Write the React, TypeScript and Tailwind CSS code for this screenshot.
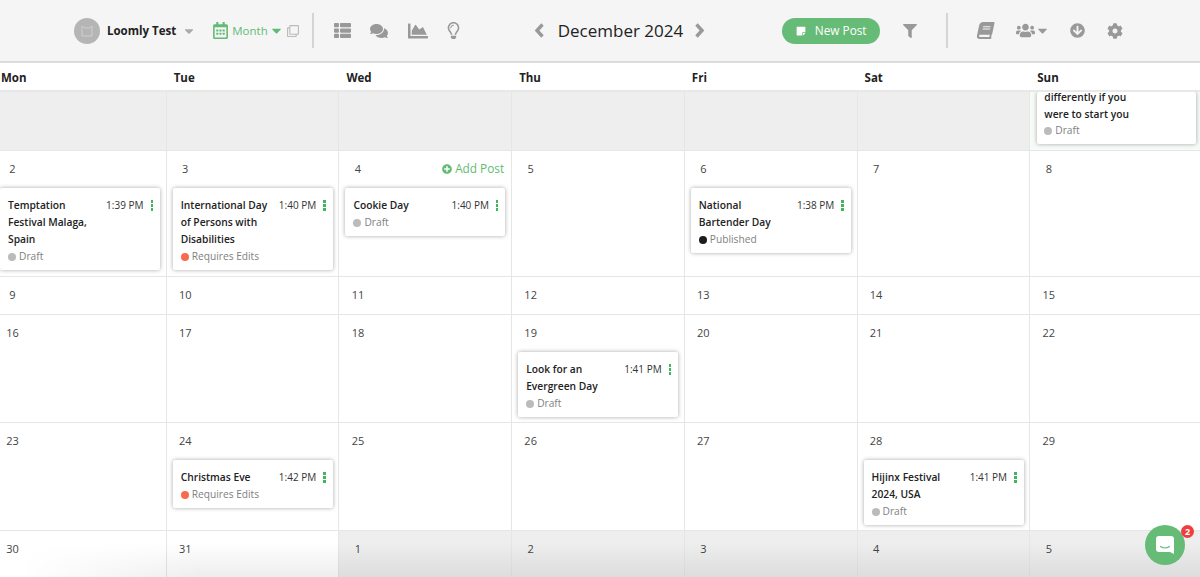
import React from 'react';
import {
  FaThList,
  FaComments,
  FaChartArea,
  FaRegLightbulb,
  FaStickyNote,
  FaFilter,
  FaBook,
  FaUsers,
  FaArrowCircleDown,
  FaCog,
  FaPlusCircle,
  FaRegCalendarAlt,
  FaRegClone,
  FaCaretDown,
} from 'react-icons/fa';

type Status = 'Draft' | 'Requires Edits' | 'Published';

type Post = { title: string; time: string; status: Status };

type Day = { label: string; muted?: boolean; post?: Post; addPost?: boolean };

const dotColor: Record<Status, string> = {
  Draft: 'bg-[#bbbbbb]',
  'Requires Edits': 'bg-[#fb6a4e]',
  Published: 'bg-[#1c1c1c]',
};

const dayNames = ['Mon', 'Tue', 'Wed', 'Thu', 'Fri', 'Sat', 'Sun'];

const weeks: Day[][] = [
  [
    { label: '2', post: { title: 'Temptation Festival Malaga, Spain', time: '1:39 PM', status: 'Draft' } },
    { label: '3', post: { title: 'International Day of Persons with Disabilities', time: '1:40 PM', status: 'Requires Edits' } },
    { label: '4', addPost: true, post: { title: 'Cookie Day', time: '1:40 PM', status: 'Draft' } },
    { label: '5' },
    { label: '6', post: { title: 'National Bartender Day', time: '1:38 PM', status: 'Published' } },
    { label: '7' },
    { label: '8' },
  ],
  [{ label: '9' }, { label: '10' }, { label: '11' }, { label: '12' }, { label: '13' }, { label: '14' }, { label: '15' }],
  [
    { label: '16' },
    { label: '17' },
    { label: '18' },
    { label: '19', post: { title: 'Look for an Evergreen Day', time: '1:41 PM', status: 'Draft' } },
    { label: '20' },
    { label: '21' },
    { label: '22' },
  ],
  [
    { label: '23' },
    { label: '24', post: { title: 'Christmas Eve', time: '1:42 PM', status: 'Requires Edits' } },
    { label: '25' },
    { label: '26' },
    { label: '27' },
    { label: '28', post: { title: 'Hijinx Festival 2024, USA', time: '1:41 PM', status: 'Draft' } },
    { label: '29' },
  ],
  [
    { label: '30' },
    { label: '31' },
    { label: '1', muted: true },
    { label: '2', muted: true },
    { label: '3', muted: true },
    { label: '4', muted: true },
    { label: '5', muted: true },
  ],
];

const StatusLine = ({ status }: { status: Status }) => (
  <div className="mt-[1px] flex h-[16px] items-center gap-[3px] text-[10.2px] text-[#808080]">
    <span className={`h-[8px] w-[8px] rounded-full ${dotColor[status]}`} />
    <span>{status}</span>
  </div>
);

const PostCard = ({ post }: { post: Post }) => (
  <div className="ml-[6px] w-[160px] rounded-[2px] bg-white pb-[5px] pl-[8px] pr-[7px] pt-[9px] shadow-[0_0_4px_rgba(0,0,0,0.35)]">
    <div className="flex items-start">
      <div className="w-[91px] text-[10.25px] font-semibold leading-[17px] text-[#222]">{post.title}</div>
      <div className="ml-auto flex items-center">
        <span className="text-[10px] leading-[17px] text-[#333]">{post.time}</span>
        <span className="ml-[7px] flex flex-col gap-[1.5px]">
          <i className="block h-[2.5px] w-[2.5px] bg-[#3fb65c]" />
          <i className="block h-[2.5px] w-[2.5px] bg-[#3fb65c]" />
          <i className="block h-[2.5px] w-[2.5px] bg-[#3fb65c]" />
        </span>
      </div>
    </div>
    <StatusLine status={post.status} />
  </div>
);

const DayCell = ({ day }: { day: Day }) => (
  <div className={`overflow-hidden border-b border-r border-[#e6e6e6] ${day.muted ? 'bg-[#eeeeee]' : 'bg-white'}`}>
    <div className="flex h-[37px] items-center justify-between pr-[7px]">
      <span className="w-[37px] text-center text-[11px] text-[#444]">{day.label}</span>
      {day.addPost && (
        <span className="-mt-[2px] flex items-center gap-[3px] text-[11.8px] text-[#62bb75]">
          <FaPlusCircle size={10} />
          Add Post
        </span>
      )}
    </div>
    {day.post && <PostCard post={day.post} />}
  </div>
);

const Divider = ({ className }: { className: string }) => <div className={`h-[35px] w-[2px] bg-[#d5d5d5] ${className}`} />;

const Chevron = ({ d, className }: { d: string; className: string }) => (
  <svg width="10" height="15" viewBox="0 0 10 15" className={className}>
    <path d={d} fill="none" stroke="#999" strokeWidth="3.4" />
  </svg>
);

export default function App() {
  return (
    <div className="relative h-[577px] w-[1200px] overflow-hidden bg-white font-['Open_Sans',sans-serif]">
      {/* Toolbar */}
      <header className="flex h-[63px] items-center border-b-2 border-[#dcdcdc] bg-[#f5f5f5] pl-[74px] text-[#999]">
        <div className="flex h-[26px] w-[26px] items-center justify-center rounded-full bg-[#b5b5b5]">
          <svg width="14" height="14" viewBox="0 0 14 14">
            <path d="M2 2l2.5 2h5L12 2v10H2z" fill="none" stroke="#cfcfcf" strokeWidth="1" />
          </svg>
        </div>
        <span className="ml-[7px] text-[11.5px] font-bold text-[#222]">Loomly Test</span>
        <FaCaretDown size={14} className="ml-[6px] text-[#aaa]" />
        <FaRegCalendarAlt size={17} className="ml-[16px] text-[#62bb75]" />
        <span className="ml-[3px] text-[11.5px] text-[#62bb75]">Month</span>
        <FaCaretDown size={15} className="ml-[1px] text-[#62bb75]" />
        <FaRegClone size={12} className="ml-[3px] text-[#bbb]" />
        <Divider className="ml-[13px]" />
        <FaThList size={17} className="ml-[20px]" />
        <FaComments size={18} className="ml-[19px]" />
        <FaChartArea size={20} className="ml-[20px]" />
        <FaRegLightbulb size={17} className="ml-[17px]" />
        <Chevron d="M8.5 1.5L3 7.5l5.5 6" className="ml-[72px]" />
        <h1 className="ml-[14px] text-[17px] font-normal text-[#222]">December 2024</h1>
        <Chevron d="M1.5 1.5L7 7.5l-5.5 6" className="ml-[12px]" />
        <button className="ml-[77px] flex h-[26px] w-[98px] items-center justify-center gap-[9px] rounded-full bg-[#66bb77] text-[11.8px] text-white">
          <FaStickyNote size={10} />
          New Post
        </button>
        <FaFilter size={14} className="ml-[23px]" />
        <Divider className="ml-[29px]" />
        <FaBook size={17} className="ml-[29px] -skew-x-12" />
        <FaUsers size={19} className="ml-[22px]" />
        <FaCaretDown size={15} />
        <FaArrowCircleDown size={15} className="ml-[20px]" />
        <FaCog size={16} className="ml-[22px]" />
      </header>

      {/* Calendar */}
      <div className="-ml-[6px] w-[1209px]">
        <div className="grid h-[29px] grid-cols-7 items-center border-b-2 border-[#e8e8e8] pt-[2px]">
          {dayNames.map((name) => (
            <span key={name} className="pl-[7px] text-[11.5px] font-bold text-[#222]">
              {name}
            </span>
          ))}
        </div>
        <div className="grid grid-cols-7 grid-rows-[59px_126px_38px_108px_108px_52px]">
          {dayNames.slice(0, 6).map((name) => (
            <div key={name} className="border-b border-r border-[#e6e6e6] bg-[#eeeeee]" />
          ))}
          <div className="flex flex-col justify-end overflow-hidden border-b border-[#e6e6e6] bg-[#f7fbf8] pb-[6px]">
            <div className="ml-[7px] w-[159px] rounded-[2px] bg-white pb-[5px] pl-[7px] shadow-[0_0_4px_rgba(0,0,0,0.35)]">
              <div className="mb-[3px] text-[10.25px] font-semibold leading-[11px] text-[#222]">differently if you</div>
              <div className="-mb-[1px] text-[10.25px] font-semibold leading-[17px] text-[#222]">were to start you</div>
              <StatusLine status="Draft" />
            </div>
          </div>
          {weeks.flat().map((day, i) => (
            <DayCell key={i} day={day} />
          ))}
        </div>
      </div>

      {/* Bottom fade */}
      <div className="pointer-events-none absolute bottom-0 left-0 h-[34px] w-full bg-gradient-to-b from-transparent to-black/[0.07] [mask-image:linear-gradient(to_right,transparent_20px,black_200px)]" />

      {/* Chat launcher */}
      <div className="absolute bottom-[12px] left-[1145px] flex h-[40px] w-[40px] items-center justify-center rounded-full bg-[#66bb77]">
        <svg width="20" height="20" viewBox="0 0 20 20">
          <path d="M4 1h12a3 3 0 0 1 3 3v15l-4-2H4a3 3 0 0 1-3-3V4a3 3 0 0 1 3-3z" fill="#fff" />
          <path d="M5.5 11.5c3 2 6 2 9 0" fill="none" stroke="#66bb77" strokeWidth="1.2" strokeLinecap="round" />
        </svg>
        <span className="absolute -right-[9px] top-0 flex h-[13px] w-[13px] items-center justify-center rounded-full bg-[#f03d3d] text-[9px] font-bold text-white">
          2
        </span>
      </div>
    </div>
  );
}
